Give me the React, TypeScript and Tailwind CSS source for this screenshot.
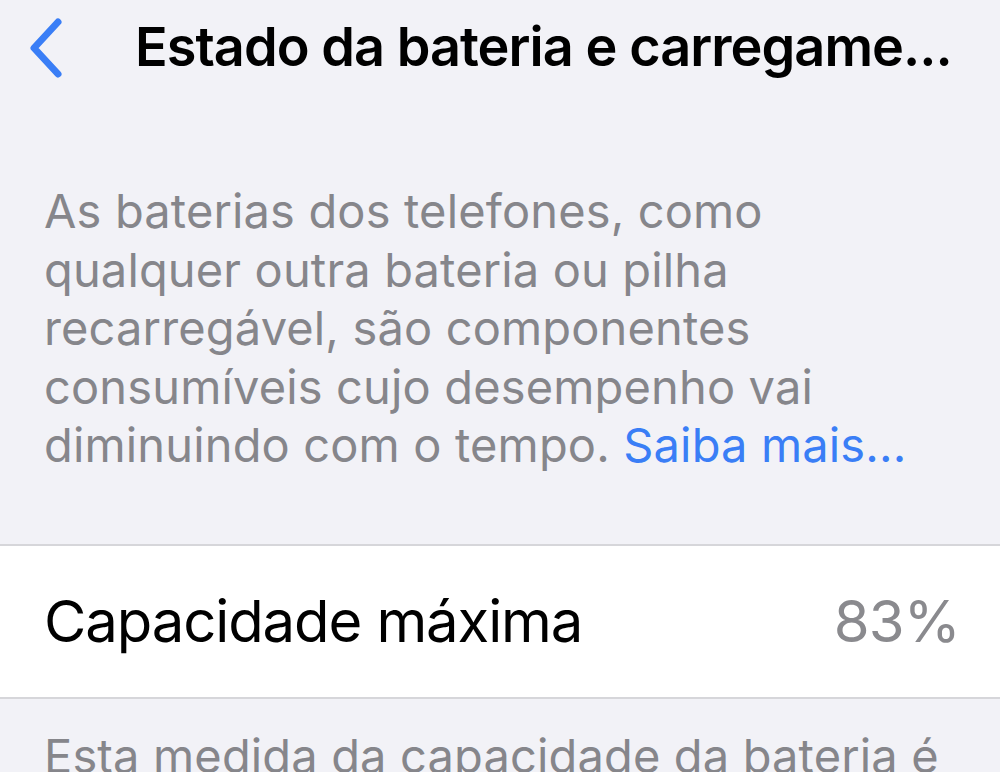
import React from "react";

export default function App() {
  return (
    <div
      className="w-[1000px] h-[772px] overflow-hidden bg-[#f2f2f7] flex flex-col"
      style={{ fontFamily: "Inter, 'Noto Sans', sans-serif" }}
    >
      <div className="h-[100px] flex items-center shrink-0">
        <div className="w-[135px] h-full flex items-center pl-[26px]">
          <svg width="40" height="64" viewBox="0 0 40 64" className="mt-[-4px]">
            <path
              d="M32 6 L8 32 L32 58"
              fill="none"
              stroke="#3a7ef6"
              strokeWidth="7"
              strokeLinecap="round"
              strokeLinejoin="round"
            />
          </svg>
        </div>
        <h1 className="text-[54px] font-semibold text-black tracking-[-0.95px] leading-none mt-[-6px] whitespace-nowrap">
          Estado da bateria e carregame...
        </h1>
      </div>
      <div className="h-[82px] shrink-0" />
      <p className="px-[44px] text-[47px] leading-[58.5px] text-[#86868b] tracking-[0.15px] h-[362px] shrink-0 whitespace-nowrap">
        As baterias dos telefones, como
        <br />
        qualquer outra bateria ou pilha
        <br />
        recarregável, são componentes
        <br />
        consumíveis cujo desempenho vai
        <br />
        diminuindo com o tempo.{" "}
        <span className="text-[#3a7ef6]">Saiba mais...</span>
      </p>
      <div className="bg-white border-y-2 border-[#d6d6da] h-[155px] flex items-center justify-between px-[44px] shrink-0">
        <span className="text-[58px] text-black tracking-[-1.1px]">Capacidade máxima</span>
        <span className="text-[58px] text-[#8a8a8e] tracking-[-0.8px] mr-[-4px]">83%</span>
      </div>
      <p className="px-[44px] pt-[28px] text-[47px] leading-[58.5px] text-[#86868b] tracking-[0.15px] whitespace-nowrap">
        Esta medida da capacidade da bateria é
      </p>
    </div>
  );
}
